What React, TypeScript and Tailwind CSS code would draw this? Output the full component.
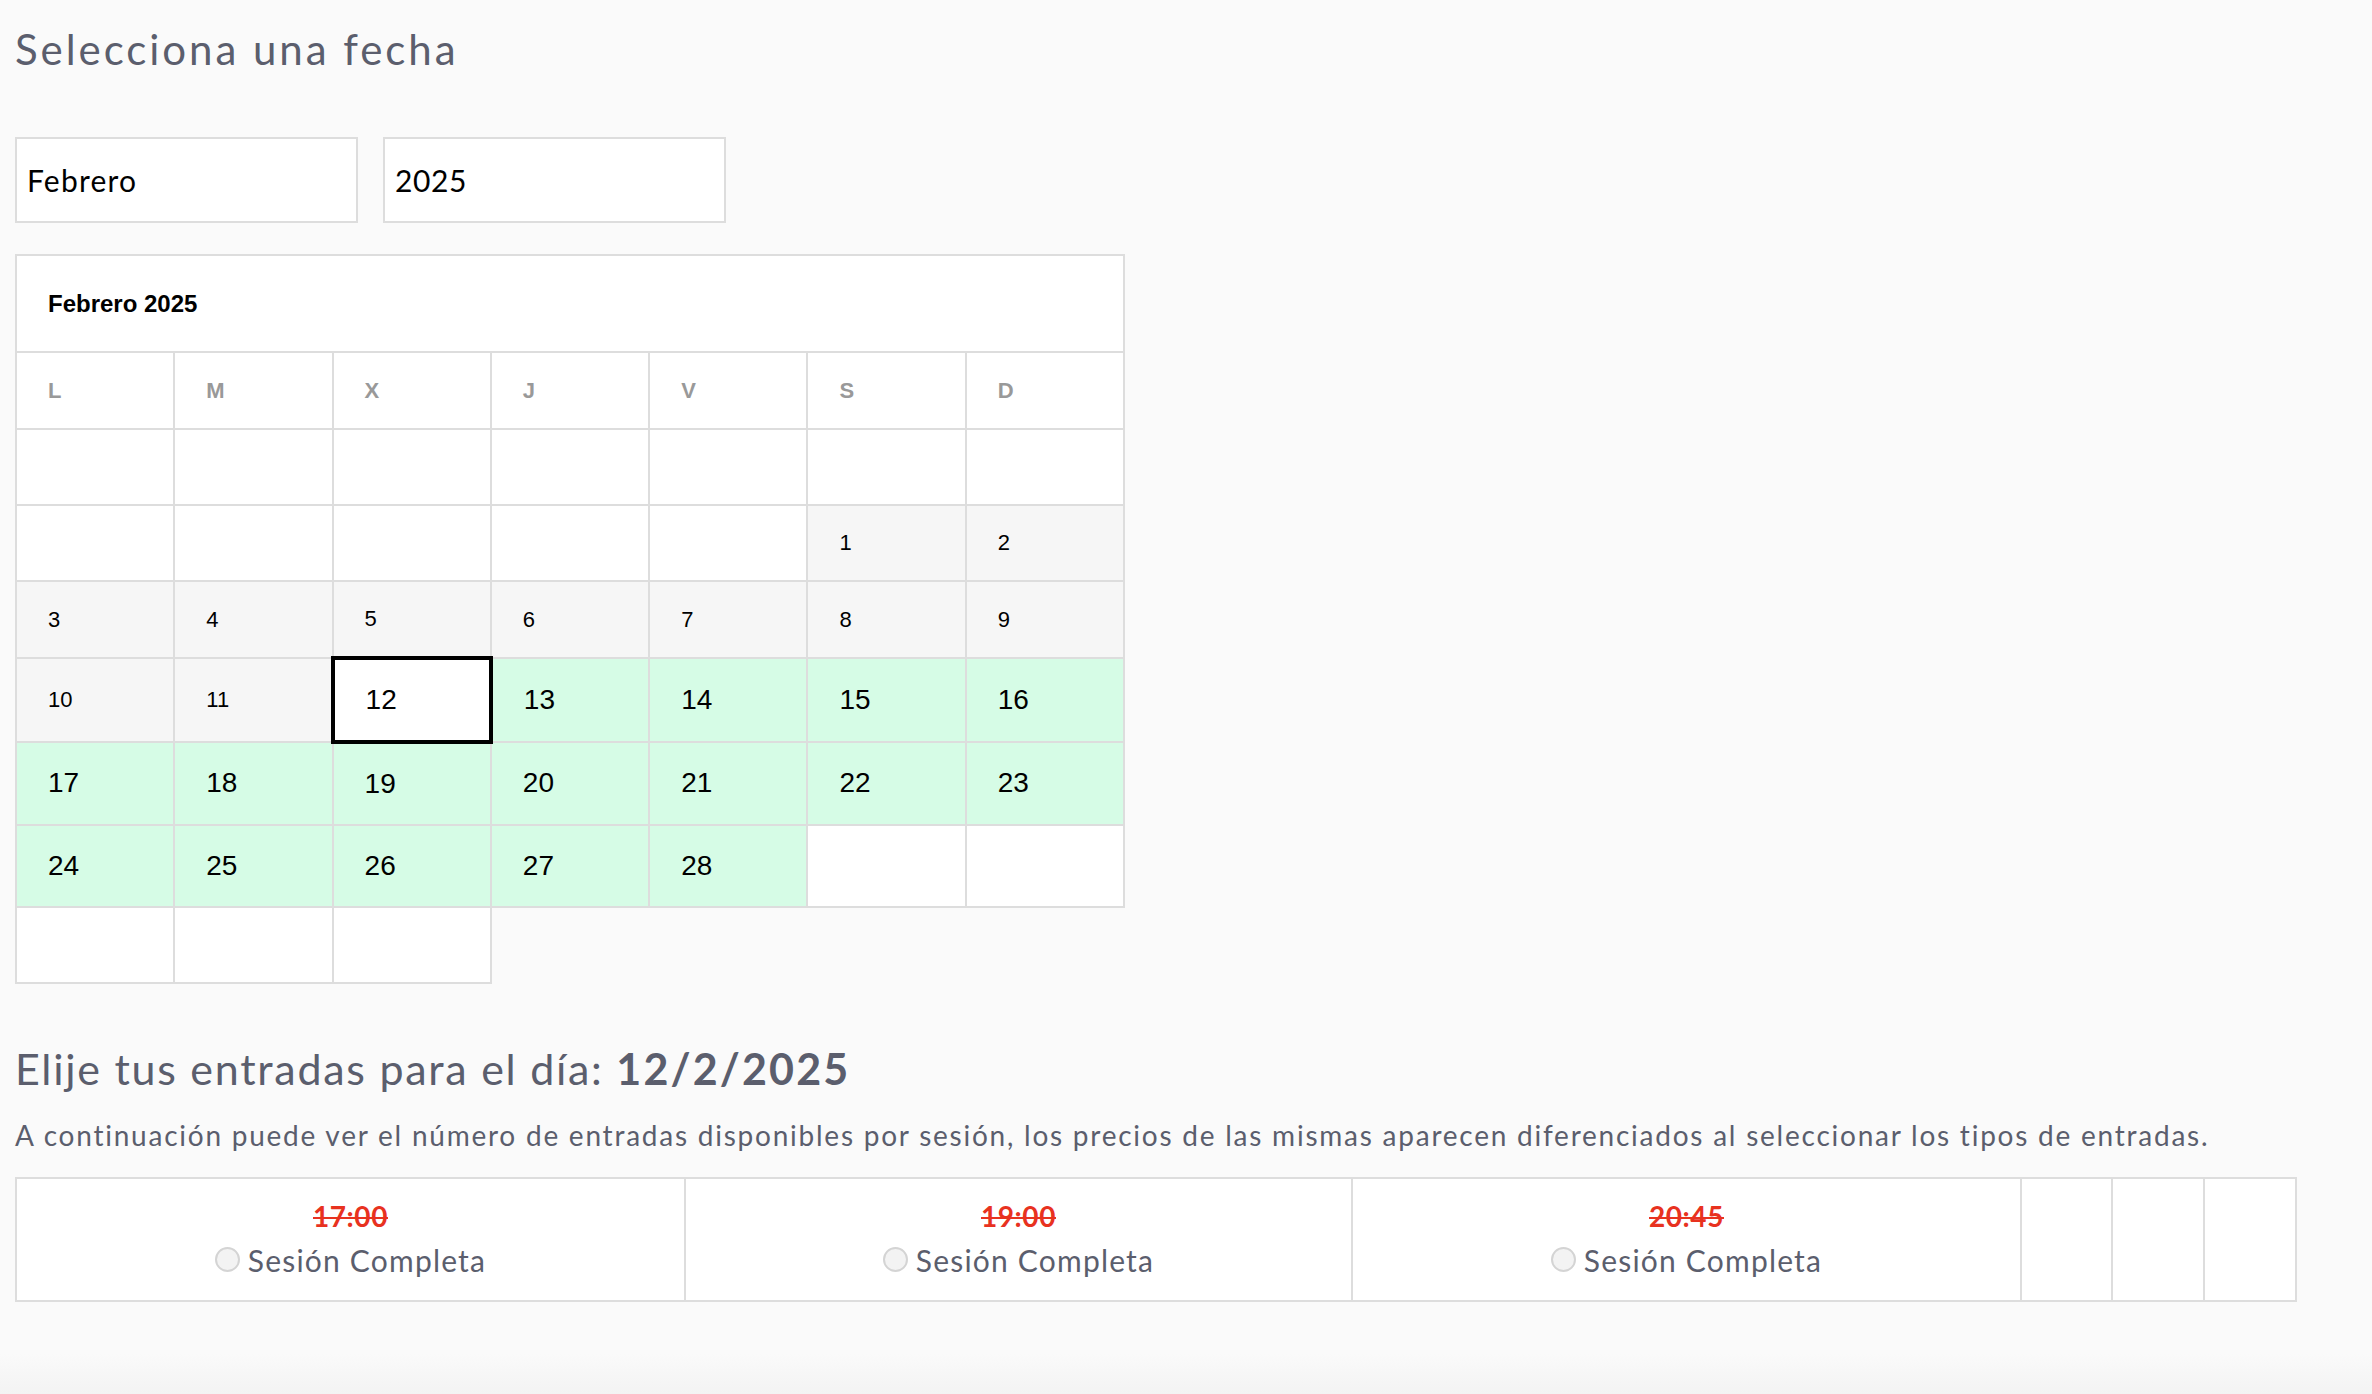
import React from 'react';

type Day = { n?: number; kind: 'empty' | 'past' | 'free' | 'selected' };

const dayNames = ['L', 'M', 'X', 'J', 'V', 'S', 'D'];

const e: Day = { kind: 'empty' };
const p = (n: number): Day => ({ n, kind: 'past' });
const f = (n: number): Day => ({ n, kind: 'free' });

const weeks: { h: string; days: Day[] }[] = [
  { h: 'h-[76px]', days: [e, e, e, e, e, e, e] },
  { h: 'h-[76px]', days: [e, e, e, e, e, p(1), p(2)] },
  { h: 'h-[77px]', days: [p(3), p(4), p(5), p(6), p(7), p(8), p(9)] },
  { h: 'h-[84px]', days: [p(10), p(11), { n: 12, kind: 'selected' }, f(13), f(14), f(15), f(16)] },
  { h: 'h-[83px]', days: [f(17), f(18), f(19), f(20), f(21), f(22), f(23)] },
  { h: 'h-[82px]', days: [f(24), f(25), f(26), f(27), f(28), e, e] },
  { h: 'h-[76px]', days: [e, e, e] },
];

const sessions = ['17:00', '19:00', '20:45'];

const raleway = 'font-[Lato,"Open_Sans",sans-serif]';
const arial = 'font-["Liberation_Sans",Arial,sans-serif]';

function DayCell({ day }: { day: Day }) {
  if (day.kind === 'empty') {
    return <td className="border-2 border-[#ddd] bg-white px-[31px] py-0" />;
  }
  if (day.kind === 'past') {
    return (
      <td className="border-2 border-[#ddd] bg-[#f6f6f6] px-[31px] py-0 text-[22px] leading-[1.15] text-black">
        {day.n}
      </td>
    );
  }
  if (day.kind === 'selected') {
    return (
      <td className="border-4 border-black bg-white px-[31px] py-0 text-[28px] leading-[1.15] text-black">
        {day.n}
      </td>
    );
  }
  return (
    <td className="border-2 border-[#ddd] bg-[#d6fce6] px-[31px] py-0 text-[28px] leading-[1.15] text-black">
      {day.n}
    </td>
  );
}

export default function App() {
  return (
    <div className={`flex min-h-screen flex-col bg-[#fafafa] ${raleway}`}>
      <div className="pl-[15px]">
        {/* Date picker */}
        <h2 className="mt-[24px] text-[42px] leading-[50px] font-normal tracking-[0.07em] text-[#5b5e6d]">
          Selecciona una fecha
        </h2>

        <div className="mt-[63px] flex gap-[25px]">
          <div className="flex h-[86px] w-[343px] items-center border-2 border-[#ddd] bg-white pl-[10px] text-[30px] tracking-[0.04em] text-black">
            Febrero
          </div>
          <div className="flex h-[86px] w-[343px] items-center border-2 border-[#ddd] bg-white pl-[10px] text-[30px] tracking-[0.02em] text-black">
            2025
          </div>
        </div>

        <table className={`mt-[31px] w-[1110px] table-fixed border-collapse ${arial}`}>
          <tbody>
            <tr className="h-[97px]">
              <td colSpan={7} className="border-2 border-[#ddd] bg-white px-[31px] text-[24px] font-bold text-black">
                Febrero 2025
              </td>
            </tr>
            <tr className="h-[77px]">
              {dayNames.map((d) => (
                <td key={d} className="border-2 border-[#ddd] bg-white px-[31px] py-0 text-[22px] leading-[1.15] font-bold text-[#999]">
                  {d}
                </td>
              ))}
            </tr>
            {weeks.map((w, i) => (
              <tr key={i} className={w.h}>
                {w.days.map((d, j) => (
                  <DayCell key={j} day={d} />
                ))}
              </tr>
            ))}
          </tbody>
        </table>

        {/* Sessions */}
        <h2 className="mt-[60px] text-[43px] leading-[50px] font-normal tracking-[0.04em] text-[#5b5e6d]">
          Elije tus entradas para el día: <span className="font-bold tracking-[0.05em]">12/2/2025</span>
        </h2>
        <p className="mt-[21px] text-[28px] leading-[40px] tracking-[0.063em] text-[#5b5e6d]">
          A continuación puede ver el número de entradas disponibles por sesión, los precios de las mismas aparecen diferenciados al seleccionar los tipos de entradas.
        </p>

        <table className="mt-[22px] w-[2280px] table-fixed border-collapse">
          <colgroup>
            <col className="w-[669px]" />
            <col className="w-[667px]" />
            <col className="w-[669px]" />
            <col className="w-[91px]" />
            <col className="w-[92px]" />
            <col className="w-[92px]" />
          </colgroup>
          <tbody>
            <tr className="h-[123px]">
              {sessions.map((s) => (
                <td key={s} className="border-2 border-[#ddd] bg-white text-center align-middle">
                  <div className="text-[28px] leading-[32px] font-bold tracking-[0.02em] text-[#e8321f] line-through decoration-2">
                    {s}
                  </div>
                  <label className="mt-[8px] flex items-center justify-center gap-[8px] text-[30px] leading-[40px] tracking-[0.04em] text-[#5b5e6d]">
                    <span className="inline-block h-[25px] w-[25px] rounded-full border-2 border-[#d4d4d4] bg-[#f3f3f3]" />
                    Sesión Completa
                  </label>
                </td>
              ))}
              <td className="border-2 border-[#ddd] bg-white" />
              <td className="border-2 border-[#ddd] bg-white" />
              <td className="border-2 border-[#ddd] bg-white" />
            </tr>
          </tbody>
        </table>
      </div>
      <div className="flex-1" />
      <div className="h-[40px] bg-gradient-to-b from-[#fafafa] to-[#f3f3f3]" />
    </div>
  );
}
